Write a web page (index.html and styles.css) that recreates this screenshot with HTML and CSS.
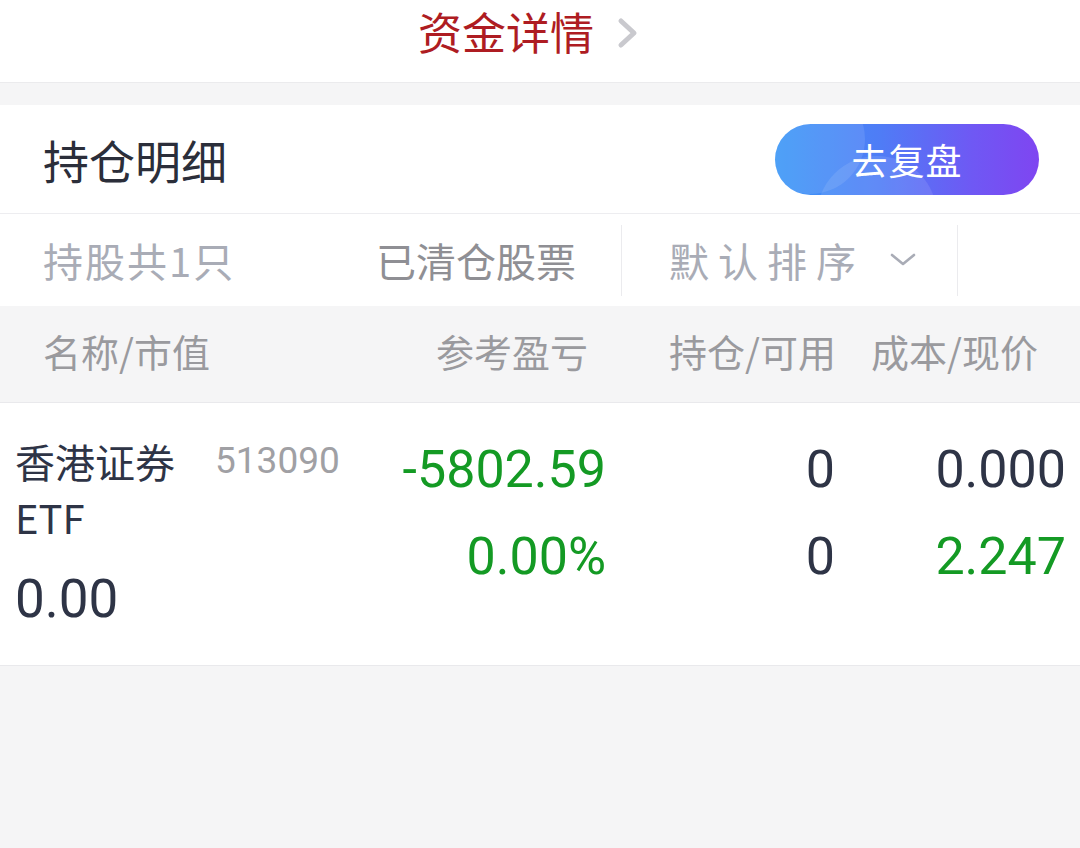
FILE: index.html
```html
<!DOCTYPE html>
<html lang="zh-CN">
<head>
    <meta charset="UTF-8">
    <meta name="viewport" content="width=device-width, initial-scale=1.0">
    <title>持仓明细</title>
    <link rel="stylesheet" href="styles.css">
</head>
<body>

<div class="topbar">
    <span class="topbar-title">资金详情</span>
    <svg class="topbar-arrow" width="24" height="34" viewBox="0 0 24 34">
        <polyline points="5,5 18,17 5,29" fill="none" stroke="#c9c9ce" stroke-width="5" stroke-linecap="round" stroke-linejoin="round"/>
    </svg>
</div>

<div class="gap"></div>

<div class="section-head">
    <h2>持仓明细</h2>
    <button class="review-btn">去复盘</button>
</div>

<div class="tabs">
    <div class="tab tab-count">持股共1只</div>
    <div class="tab tab-cleared">已清仓股票</div>
    <div class="tab tab-sort">
        <span>默认排序</span>
        <svg width="28" height="16" viewBox="0 0 28 16">
            <polyline points="3,3 14,12 25,3" fill="none" stroke="#a9acb6" stroke-width="2.6" stroke-linecap="round" stroke-linejoin="round"/>
        </svg>
    </div>
    <div class="tab tab-empty"></div>
</div>

<div class="table-head">
    <div class="col-name">名称/市值</div>
    <div class="col-num">参考盈亏</div>
    <div class="col-num">持仓/可用</div>
    <div class="col-num">成本/现价</div>
</div>

<div class="row">
    <div class="cell-name">
        <div class="name-line">
            <span class="stock-name">香港证券ETF</span>
            <span class="stock-code">513090</span>
        </div>
        <div class="market-value">0.00</div>
    </div>
    <div class="cell-num">
        <div class="down">-5802.59</div>
        <div class="down">0.00%</div>
    </div>
    <div class="cell-num">
        <div>0</div>
        <div>0</div>
    </div>
    <div class="cell-num">
        <div>0.000</div>
        <div class="down">2.247</div>
    </div>
</div>

</body>
</html>
```

FILE: styles.css
```css
body {
    margin: 0;
    padding: 0;
    background-color: #f5f5f6;
    font-family: Roboto, "Noto Sans CJK SC", sans-serif;
    color: #2e3446;
}
.topbar {
    height: 83px;
    box-sizing: border-box;
    background-color: #fff;
    border-bottom: 1px solid #ebebed;
    display: flex;
    align-items: center;
    justify-content: center;
    gap: 22px;
    padding: 0 22px 20px 0;
}
.topbar-title {
    font-size: 44px;
    color: #ae1c22;
    font-family: "Noto Sans CJK SC", sans-serif;
}
.topbar-arrow {
    margin-top: 4px;
}
.gap {
    height: 22px;
}
.section-head {
    height: 108px;
    background-color: #fff;
    border-bottom: 1px solid #ededf0;
    display: flex;
    align-items: center;
    justify-content: space-between;
    padding: 0 41px 0 43px;
}
.section-head h2 {
    margin: 0;
    font-size: 46px;
    font-weight: 400;
    color: #2b2e3a;
    font-family: "Noto Sans CJK SC", sans-serif;
}
.review-btn {
    position: relative;
    overflow: hidden;
    width: 264px;
    height: 71px;
    border: none;
    border-radius: 36px;
    background: linear-gradient(90deg, #3a97f7 0%, #4f7cf6 40%, #6f58f4 75%, #7f45f1 100%);
    color: #fff;
    font-size: 36px;
    font-family: "Noto Sans CJK SC", sans-serif;
    padding: 0;
    letter-spacing: 1px;
}
.review-btn::before,
.review-btn::after {
    content: "";
    position: absolute;
    border-radius: 50%;
    background: rgba(255, 255, 255, 0.1);
}
.review-btn::before {
    width: 110px;
    height: 110px;
    left: -20px;
    top: -40px;
}
.review-btn::after {
    width: 120px;
    height: 120px;
    left: 42px;
    top: 32px;
}
.tabs {
    height: 92px;
    background-color: #fff;
    display: grid;
    grid-template-columns: 333px 245px 337px 1fr;
    align-items: center;
    padding-left: 43px;
}
.tab {
    font-size: 40px;
    font-family: "Noto Sans CJK SC", sans-serif;
    color: #a9acb6;
}
.tab-count {
    letter-spacing: 2px;
}
.tab-cleared {
    color: #8f8f94;
}
.tab-sort {
    height: 71px;
    border-left: 1px solid #ebebee;
    border-right: 1px solid #ebebee;
    display: flex;
    align-items: center;
    padding-left: 47px;
    gap: 26px;
    letter-spacing: 9px;
}
.tab-sort svg {
    margin-left: -2px;
}
.table-head {
    height: 97px;
    box-sizing: border-box;
    background-color: #f5f5f6;
    border-bottom: 1px solid #e9e9ec;
    display: grid;
    grid-template-columns: 1fr 250px 248px 202px;
    align-items: center;
    padding: 0 42px 8px 43px;
    font-size: 38px;
    color: #9a9a9e;
    font-family: "Noto Sans CJK SC", sans-serif;
}
.col-num {
    text-align: right;
}
.row {
    height: 263px;
    background-color: #fff;
    border-bottom: 1px solid #e9e9ec;
    box-sizing: border-box;
    display: grid;
    grid-template-columns: 1fr 244px 229px 231px;
    padding: 30px 14px 0 15px;
}
.name-line {
    display: flex;
    align-items: flex-start;
    gap: 36px;
}
.stock-name {
    width: 164px;
    font-size: 40px;
    line-height: 56px;
    font-family: "Noto Sans CJK SC", sans-serif;
}
.stock-code {
    font-size: 37px;
    line-height: 56px;
    color: #a0a0a4;
}
.market-value {
    margin-top: 26px;
    font-size: 53px;
    line-height: 56px;
}
.cell-num {
    text-align: right;
    font-size: 52px;
    line-height: 87px;
    margin-top: -7px;
}
.down {
    color: #149a24;
}
```
